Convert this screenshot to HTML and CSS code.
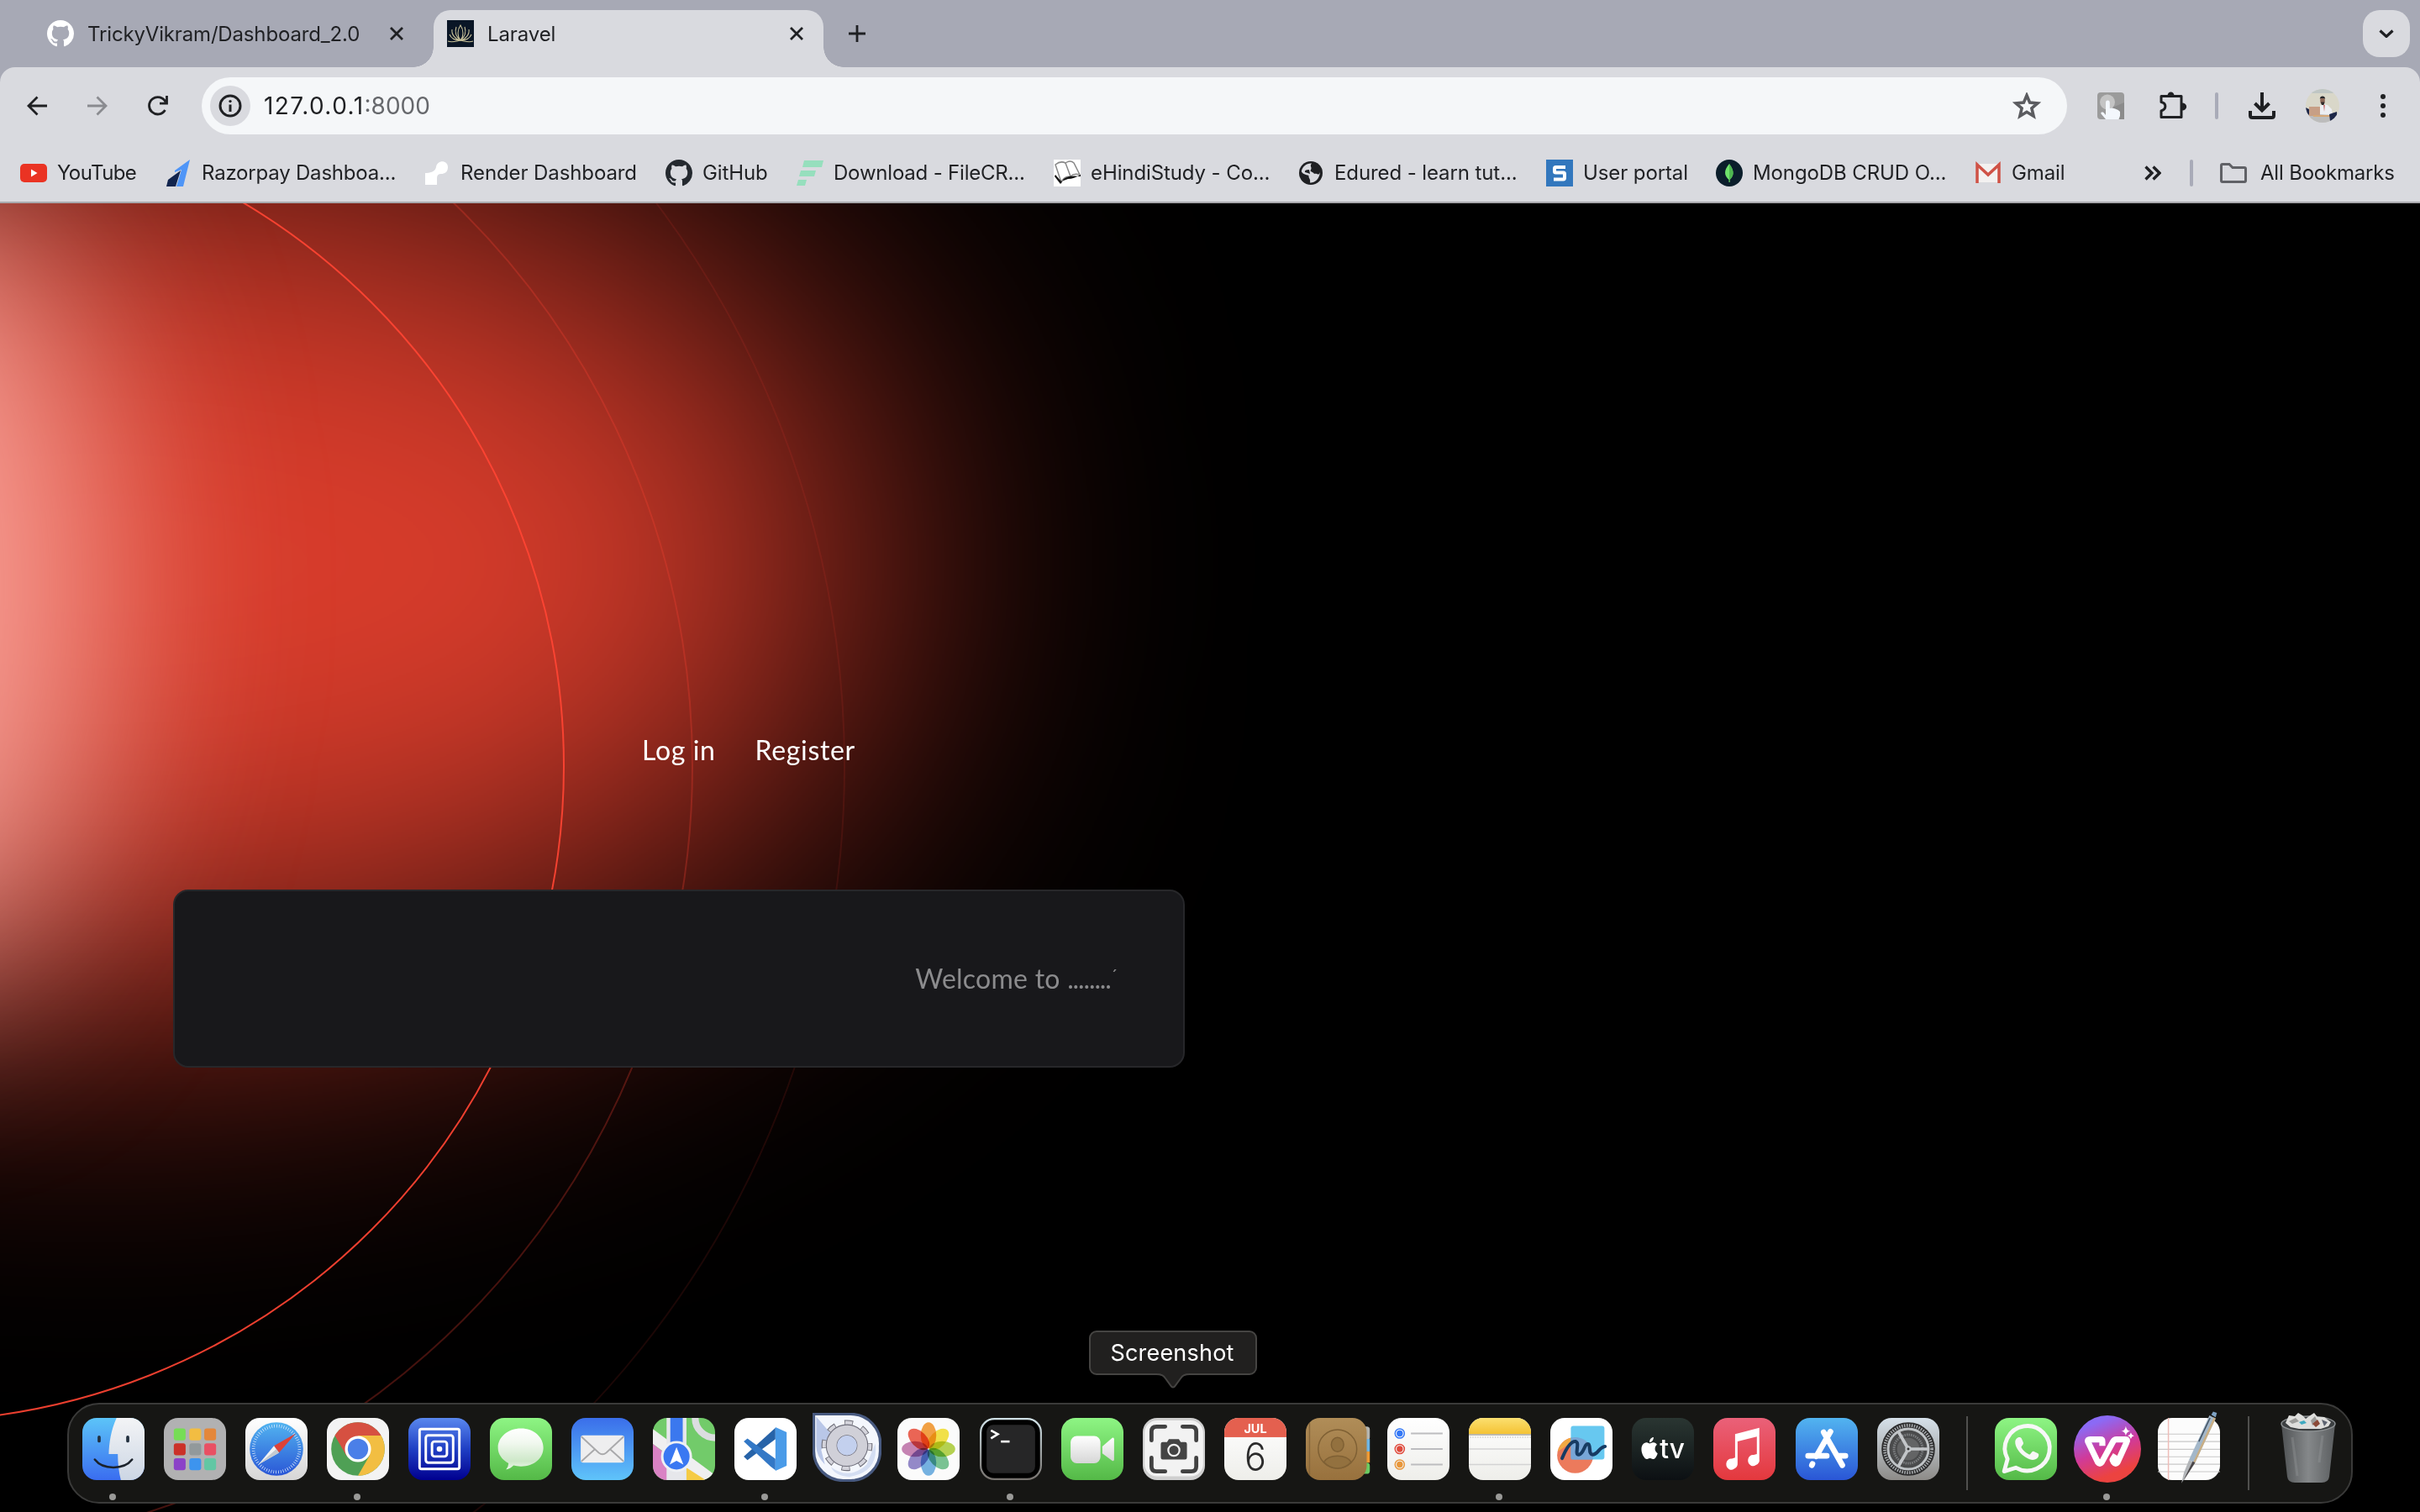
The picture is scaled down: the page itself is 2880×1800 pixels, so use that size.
FILE: index.html
```html
<!DOCTYPE html>
<html lang="en">
<head>
<meta charset="utf-8">
<title>Laravel</title>
<link rel="stylesheet" href="styles.css">
</head>
<body>
<div class="screen">
  <header class="browser">
    <div class="tabs">
      <div class="tab tab-idle">
        <svg class="fav white" viewBox="0 0 16 16"><path id="gh" d="M8 0C3.58 0 0 3.58 0 8c0 3.54 2.29 6.53 5.47 7.59.4.07.55-.17.55-.38 0-.19-.01-.82-.01-1.49-2.01.37-2.53-.49-2.69-.94-.09-.23-.48-.94-.82-1.13-.28-.15-.68-.52-.01-.53.63-.01 1.08.58 1.23.82.72 1.21 1.87.87 2.33.66.07-.52.28-.87.51-1.07-1.78-.2-3.64-.89-3.64-3.95 0-.87.31-1.59.82-2.15-.08-.2-.36-1.02.08-2.12 0 0 .67-.21 2.2.82.64-.18 1.32-.27 2-.27.68 0 1.36.09 2 .27 1.53-1.04 2.2-.82 2.2-.82.44 1.1.16 1.92.08 2.12.51.56.82 1.27.82 2.15 0 3.07-1.87 3.75-3.65 3.95.29.25.54.73.54 1.48 0 1.07-.01 1.93-.01 2.2 0 .21.15.46.55.38A8.013 8.013 0 0016 8c0-4.42-3.58-8-8-8z"/></svg>
        <span class="tab-title t-a">TrickyVikram/Dashboard_2.0</span>
        <svg class="close" viewBox="0 0 16 16"><path d="M1 1 15 15M15 1 1 15"/></svg>
      </div>
      <div class="tab tab-active">
        <svg class="fav" viewBox="0 0 32 32"><rect width="32" height="32" fill="#0a1626"/><g fill="none" stroke="#c9c29a" stroke-width="1.1"><path d="M16 6c-4 6-4 13 0 18 4-5 4-12 0-18zM11 8c-2 6 0 12 5 16M21 8c2 6 0 12-5 16M6 11c-1 6 4 12 10 13M26 11c1 6-4 12-10 13M3 17c2 5 7 7 13 7M29 17c-2 5-7 7-13 7"/><path d="M1 25c5 2 10 0 15-1 5 1 10 3 15 1"/></g></svg>
        <span class="tab-title t-b">Laravel</span>
        <svg class="close" viewBox="0 0 16 16"><path d="M1 1 15 15M15 1 1 15"/></svg>
      </div>
      <svg class="plus" viewBox="0 0 20 20"><path d="M10 0V20M0 10H20"/></svg>
      <div class="tab-menu"><svg viewBox="0 0 18 10"><path d="M1.5 1.5 9 8.5 16.5 1.5"/></svg></div>
    </div>

    <div class="toolbar">
      <svg class="nav-ico" viewBox="0 0 24 24"><path d="M24 12H2M12.5 1.5 2 12 12.5 22.5"/></svg>
      <svg class="nav-ico dim" viewBox="0 0 24 24"><path d="M0 12H22M11.5 1.5 22 12 11.5 22.5"/></svg>
      <svg class="nav-ico" viewBox="0 0 24 24"><path d="M20.5 17A10.2 10.2 0 1 1 21 7.5M22.5 0V9.2H14"/></svg>
      <div class="omnibox">
        <div class="site-info"><svg viewBox="0 0 28 28"><circle cx="14" cy="14" r="12" fill="none" stroke="#1f2023" stroke-width="3"/><path d="M14 12.5V21" stroke="#1f2023" stroke-width="3"/><circle cx="14" cy="8.6" r="1.7" fill="#1f2023"/></svg></div>
        <span class="url">127.0.0.1<span class="port">:8000</span></span>
        <svg class="star" viewBox="0 0 34 32"><path d="M17 3.5 20.6 12.1 30 12.9 22.9 19 25.1 28.2 17 23.3 8.9 28.2 11.1 19 4 12.9 13.4 12.1Z"/></svg>
      </div>
      <svg class="ext" viewBox="0 0 32 32"><rect width="32" height="32" rx="4" fill="#9b9b9b"/><path d="M18 18 32 12V32H18z" fill="#8b8b8b"/><circle cx="12" cy="11.5" r="9" fill="#c4c4c4"/><path d="M10 22V12a2.4 2.4 0 0 1 4.8 0v7l3-.5 3.5 1 3.500 1.500 2.200 2V28l-1.500 4H10L4.500 25.500c-1-2 1.500-2.500 3-1.500l2.500 3z" fill="#f3f7fc"/></svg>
      <svg class="puzzle" viewBox="0 0 34 34"><path d="M3 6.500H27V31.500H3V24C9.500 22 9.500 15 3 13.500Z" fill="none" stroke="#1f2023" stroke-width="3" stroke-linejoin="round"/><path d="M10.500 6a4 4.500 0 0 1 8 0zM28 14.500a4.800 4.200 0 0 1 0 9z" fill="#1f2023"/></svg>
      <i class="bar"></i>
      <svg class="download" viewBox="0 0 32 32"><path d="M16 0V21M7.500 13 16 21.500 24.500 13" /><path d="M2 22V27.500Q2 30 4.500 30H27.500Q30 30 30 27.500V22"/></svg>
      <svg class="avatar" viewBox="0 0 40 40"><defs><clipPath id="av"><circle cx="20" cy="20" r="20"/></clipPath></defs><g clip-path="url(#av)"><rect width="40" height="40" fill="#d9d7c9"/><rect y="28" width="40" height="12" fill="#bcbcbc"/><rect width="40" height="5" fill="#bfc6c4"/><path d="M15 30 17 20 20 18 26 19 31 24 32 31z" fill="#eceef3"/><path d="M21 19h2l-1 8z" fill="#c77"/><ellipse cx="20" cy="13.500" rx="2.800" ry="4.500" fill="#8a6556"/><path d="M16.800 12c0-4.600 6.400-4.600 6.400 0l-1-1h-4.400z" fill="#26262b"/><path d="M18 15.500h4.500l-1 3.500h-2.500z" fill="#2f2a2c"/><rect x="4" y="21" width="13" height="11" fill="#c79f86"/><rect x="9" y="31" width="20" height="2" fill="#d6a878"/><path d="M0 22 4 24V31L0 28zM28 30 37 27V36L29 38z" fill="#1d2748"/></g></svg>
      <svg class="dots" viewBox="0 0 8 28"><circle cx="4" cy="3" r="3"/><circle cx="4" cy="14" r="3"/><circle cx="4" cy="25" r="3"/></svg>
    </div>

    <nav class="bookmarks">
      <a><svg viewBox="0 0 32 32"><rect y="5" width="32" height="22" rx="5" fill="#ea3323"/><path d="M13 11.500V20.500L20.500 16z" fill="#fff"/></svg><span class="b-youtube">YouTube</span></a>
      <a><svg viewBox="0 0 32 32"><path d="M30 0 22 32H14L20 12 12 15V13z" fill="#4f95f7"/><path d="M19 13 13 32H2L4 24z" fill="#11244e"/></svg><span class="b-long">Razorpay Dashboa...</span></a>
      <a><svg viewBox="0 0 32 32"><path d="M2 30V16C9 16 14 14 15 9 16 0 29 0 29 9 29 15 25 17 21 17Q16 17 16 22V30z" fill="#fff"/></svg><span>Render Dashboard</span></a>
      <a><svg viewBox="0 0 16 16" fill="#24292f"><use href="#gh"/></svg><span>GitHub</span></a>
      <a><svg viewBox="0 0 32 32" fill="#96dfbd"><path d="M9 1H32L30 9H7zM5 13H23L21 20H3zM2 24H12L10 31H0z"/></svg><span class="b-long">Download - FileCR...</span></a>
      <a><svg viewBox="0 0 32 32"><rect width="32" height="32" fill="#fff"/><path d="M2 6Q8 1 14 4L20 20Q12 20 9 27zM14 4Q20 0 24 4L31 18Q24 16 20 20" fill="#fff" stroke="#888" stroke-width="1.500"/><path d="M1 20 8 29 12 23Q18 18 32 20V18Q24 23 17 23L9 26 2 18z" fill="#111"/></svg><span>eHindiStudy - Co...</span></a>
      <a><svg viewBox="0 0 32 32"><circle cx="16" cy="16" r="14" fill="#1f2023"/><path d="M17 4.500C14 8 18 9 16 12 14 15 19 14 20 17 24 16 25 20 27 15 26 24 20 28 15 27.500 16 23 13 22 13.500 19 10 18 6 17 4.800 14 6 8 11 4 17 4.500z" fill="#d9dadf"/><path d="M14 12q-6 0-5 3 4 1 6 2z" fill="#1f2023"/></svg><span>Edured - learn tut...</span></a>
      <a><svg viewBox="0 0 32 32"><rect width="32" height="32" fill="#3277bd"/><path d="M23 9H11.500Q10 9 10 10.500V14Q10 15.500 11.500 15.500H20.500Q22 15.500 22 17V21.500Q22 23.500 20.500 23.500H9" fill="none" stroke="#fff" stroke-width="4"/></svg><span>User portal</span></a>
      <a><svg viewBox="0 0 32 32"><circle cx="16" cy="16" r="16" fill="#0b1e2b"/><path d="M16 5C9 13 10 19 15.500 24V27H16.600V24C22 19 22 13 16 5z" fill="#6fe26b"/><path d="M16 5V27H16.600V24C22 19 22 13 16 5z" fill="#4fb851"/></svg><span>MongoDB CRUD O...</span></a>
      <a><svg viewBox="0 0 32 32"><path d="M2 5H30V27H2z" fill="#f3f1f0"/><path d="M3 28V6L16 18 29 6V28" fill="none" stroke="#cf5246" stroke-width="3.500"/></svg><span>Gmail</span></a>
      <svg class="more" viewBox="0 0 20 18"><path d="M1.500 1.500 9 9 1.500 16.500M10.500 1.500 18 9 10.500 16.500"/></svg>
      <i class="bar"></i>
      <a class="all"><svg viewBox="0 0 32 32"><path d="M1.500 7Q1.500 5.500 3 5.500H11L15 9.500H29Q30.500 9.500 30.500 11V25Q30.500 26.500 29 26.500H3Q1.500 26.500 1.500 25z" fill="none" stroke="#606166" stroke-width="3"/></svg><span class="b-long">All Bookmarks</span></a>
    </nav>
  </header>

  <main class="page">
    <svg class="backdrop" viewBox="0 242 1700 1558">
      <defs>
        <filter id="f1" filterUnits="userSpaceOnUse" x="-1800" y="-1200" width="4400" height="4000" color-interpolation-filters="sRGB"><feGaussianBlur stdDeviation="205"/></filter>
        <filter id="f2" filterUnits="userSpaceOnUse" x="-1200" y="-600" width="2400" height="2600" color-interpolation-filters="sRGB"><feGaussianBlur stdDeviation="120"/></filter>
      </defs>
      <ellipse cx="110" cy="668" rx="930" ry="515" fill="#d83c2b" filter="url(#f1)"/>
      <ellipse cx="-130" cy="700" rx="250" ry="480" fill="#ffb9b2" fill-opacity=".8" filter="url(#f2)"/>
      <g fill="none" stroke="#ff4433" stroke-width="2">
        <circle cx="-109" cy="912" r="780" stroke-opacity=".92"/>
        <circle cx="-109" cy="912" r="933" stroke-opacity=".27"/>
        <circle cx="-109" cy="912" r="1114" stroke-opacity=".11"/>
      </g>
    </svg>
    <nav class="auth"><a>Log in</a><a>Register</a></nav>
    <section class="card"><p>Welcome to <span class="ellipsis">........</span><span class="tick">´</span></p></section>
  </main>

  <div class="tooltip"><span>Screenshot</span><svg viewBox="0 0 40 18"><path d="M0 0H40V2C33 2 31 3 29 6L22 15.500Q20 17.500 18 15.500L11 6C9 3 7 2 0 2z" fill="#21201f"/><path d="M0 1C7 1 9 3 11 6L18 15.500Q20 17.500 22 15.500L29 6C31 3 33 1 40 1" fill="none" stroke="#454442" stroke-width="2"/></svg></div>

  <footer class="dock">
    <svg class="defs" width="0" height="0"><defs>
      <linearGradient id="gFinder" x2="0" y2="1"><stop stop-color="#5cc4f8"/><stop offset="1" stop-color="#3a6df0"/></linearGradient>
      <linearGradient id="gFinder2" x2="0" y2="1"><stop stop-color="#f3f4f6"/><stop offset="1" stop-color="#ccd6e4"/></linearGradient>
      <linearGradient id="gGreen" x2="0" y2="1"><stop stop-color="#8ef584"/><stop offset="1" stop-color="#54b947"/></linearGradient>
      <linearGradient id="gBlue" x2="0" y2="1"><stop stop-color="#3a6eea"/><stop offset="1" stop-color="#5fc4fa"/></linearGradient>
      <linearGradient id="gDeep" x2="0" y2="1"><stop stop-color="#5a88ee"/><stop offset=".5" stop-color="#1f3fc4"/><stop offset="1" stop-color="#00008f"/></linearGradient>
      <linearGradient id="gWhite" x2="0" y2="1"><stop stop-color="#fff"/><stop offset="1" stop-color="#d6d6d6"/></linearGradient>
      <linearGradient id="gPaper" x2="0" y2="1"><stop stop-color="#fff"/><stop offset="1" stop-color="#eeeeea"/></linearGradient>
      <linearGradient id="gBubble" x2="0" y2="1"><stop stop-color="#fff"/><stop offset=".35" stop-color="#f1f8ef"/><stop offset=".8" stop-color="#cde8c8"/><stop offset="1" stop-color="#eef8ec"/></linearGradient>
      <linearGradient id="gStore" x2="0" y2="1"><stop stop-color="#52b4f0"/><stop offset="1" stop-color="#2a56d6"/></linearGradient>
      <linearGradient id="gMusic" x2="0" y2="1"><stop stop-color="#ea6179"/><stop offset="1" stop-color="#e4383d"/></linearGradient>
      <linearGradient id="gSet" x2="0" y2="1"><stop stop-color="#d6e1ea"/><stop offset="1" stop-color="#8d8b88"/></linearGradient>
      <linearGradient id="gTv" x2="0" y2="1"><stop stop-color="#2a3632"/><stop offset="1" stop-color="#0c1013"/></linearGradient>
      <linearGradient id="gWood" x2="0" y2="1"><stop stop-color="#b08d58"/><stop offset="1" stop-color="#98713d"/></linearGradient>
      <linearGradient id="gYel" x2="0" y2="1"><stop stop-color="#fbdf70"/><stop offset="1" stop-color="#f4c233"/></linearGradient>
      <linearGradient id="gTerm" x2="0" y2="1"><stop stop-color="#cfe0e6"/><stop offset="1" stop-color="#77736f"/></linearGradient>
      <linearGradient id="gWps" x1=".3" x2=".7" y2="1"><stop offset=".1" stop-color="#8b6af5"/><stop offset=".5" stop-color="#d03a9a"/><stop offset=".85" stop-color="#ec4340"/></linearGradient>
      <linearGradient id="gCan"><stop stop-color="#4f5254"/><stop offset=".5" stop-color="#85888a"/><stop offset="1" stop-color="#5b5e60"/></linearGradient>
      <clipPath id="sq"><rect width="100" height="100" rx="23"/></clipPath>
    </defs></svg>

    <div class="app on"><svg viewBox="0 0 100 100"><g clip-path="url(#sq)"><rect width="100" height="100" fill="url(#gFinder)"/><path d="M55 0C46 20 43 40 42.500 58H57C57 74 59 88 62 100H100V0z" fill="url(#gFinder2)"/></g><path d="M27 31V37M73 31V37" stroke="#22303f" stroke-width="5" stroke-linecap="round"/><path d="M20 67C33 84 67 84 80 67" fill="none" stroke="#1b222b" stroke-width="3.500" stroke-linecap="round"/></svg><i></i></div>
    <div class="app"><svg viewBox="0 0 100 100"><rect width="100" height="100" rx="23" fill="#b1b1b2"/><rect x="16" y="17" width="19" height="19" rx="4" fill="#76dd55"/><rect x="41" y="17" width="19" height="19" rx="4" fill="#f2bd42"/><rect x="65" y="17" width="19" height="19" rx="4" fill="#e4873a"/><rect x="16" y="41" width="19" height="19" rx="4" fill="#cb3128"/><rect x="41" y="41" width="19" height="19" rx="4" fill="#92999b"/><rect x="65" y="41" width="19" height="19" rx="4" fill="#e95063"/><rect x="16" y="65" width="19" height="19" rx="4" fill="#8b41c8"/><rect x="41" y="65" width="19" height="19" rx="4" fill="#3d94ee"/><rect x="65" y="65" width="19" height="19" rx="4" fill="#62c7a4"/></svg><i></i></div>
    <div class="app"><svg viewBox="0 0 100 100"><rect width="100" height="100" rx="23" fill="url(#gWhite)"/><circle cx="50" cy="50" r="43" fill="url(#gStore)"/><circle cx="50" cy="50" r="37" fill="none" stroke="#dcebfb" stroke-width="5" stroke-dasharray="1 2.870"/><path d="M81 25 54 56 46 45z" fill="#dd4238"/><path d="M46 45 54 56 21 75z" fill="#f0f2f4"/><path d="M50 50 54 56 21 75z" fill="#c4cad0"/></svg><i></i></div>
    <div class="app on"><svg viewBox="0 0 100 100"><rect width="100" height="100" rx="23" fill="#f3f3f3"/><circle cx="50" cy="50" r="43" fill="#4fa055"/><path d="M50 50 12.800 28.500A43 43 0 0 1 87.200 28.500z" fill="#d65041"/><path d="M50 28.500H87.200A43 43 0 0 1 50 93L68.500 60.700z" fill="#f2be42"/><path d="M12.800 28.500 31.400 60.700 50 50 50 28.500z" fill="#d65041"/><circle cx="50" cy="50" r="21" fill="#fff"/><circle cx="50" cy="50" r="16.500" fill="#4a7fe8"/></svg><i></i></div>
    <div class="app"><svg viewBox="0 0 100 100"><rect width="100" height="100" rx="23" fill="url(#gDeep)"/><g fill="none" stroke="#fff" stroke-width="4"><rect x="18" y="18" width="64" height="64" rx="3"/><rect x="28" y="28" width="44" height="44" rx="4"/><rect x="38" y="38" width="24" height="24" rx="4"/></g><circle cx="50" cy="50" r="4.500" fill="#fff"/></svg><i></i></div>
    <div class="app"><svg viewBox="0 0 100 100"><rect width="100" height="100" rx="23" fill="url(#gGreen)"/><path d="M50 17C71 17 86 31 86 48S71 78 50 78Q43 78 38 76.500 33 82 26 83 30 78 30 73C19 67 13 58 13 48 13 31 29 17 50 17z" fill="url(#gBubble)"/></svg><i></i></div>
    <div class="app"><svg viewBox="0 0 100 100"><rect width="100" height="100" rx="23" fill="url(#gBlue)"/><rect x="15" y="28" width="70" height="44" rx="4" fill="#eeeeef"/><path d="M16 30 44 56Q50 61 56 56L84 30M16 70 37 51M84 70 63 51" fill="none" stroke="#a9a9ab" stroke-width="2.500"/></svg><i></i></div>
    <div class="app"><svg viewBox="0 0 100 100"><g clip-path="url(#sq)"><rect width="100" height="100" fill="#72cb6a"/><path d="M0 18 100 92V110L80 100 0 42z" fill="#efeff0"/><path d="M0 42 24 60V100H0z" fill="#d982c4"/><path d="M54 80 88 102H54z" fill="#f5cb45"/><path d="M22 0H54V100H22z" fill="#e6e7eb"/><path d="M28 0H48V60H28z" fill="#3b78ee"/><circle cx="100" cy="0" r="32" fill="none" stroke="#dcdde0" stroke-width="11"/></g><circle cx="38" cy="62" r="25" fill="#eef0f4"/><circle cx="38" cy="62" r="21" fill="#3a78f2"/><path d="M38 47 49 75 38 69 27 75z" fill="#fff"/></svg><i></i></div>
    <div class="app on"><svg viewBox="0 0 100 100"><rect width="100" height="100" rx="23" fill="#fff"/><path d="M15 62 21 68 66 34V16z" fill="#2763a8"/><path d="M15 38 21 33 66 66V84L58 78z" fill="#3378c6"/><path d="M66 15 84 23V77L66 85z" fill="#4a9be8"/></svg><i></i></div>
    <div class="app"><svg class="wide" viewBox="0 0 112 112"><path d="M2 2H62A48 48 0 0 1 110 54V62A48 48 0 0 1 62 110H50A48 48 0 0 1 2 62z" fill="#f4f7fd" stroke="#47597f" stroke-width="4.500"/><path d="M6 6 30 34 14 60 20 84Q6 70 6 54z" fill="#b9c7e8"/><path d="M30 88Q60 110 88 84L102 50Q108 96 60 104 36 102 30 88z" fill="#d4def2"/><circle cx="56" cy="53" r="35" fill="none" stroke="#6e6e78" stroke-width="13" stroke-dasharray="13 14.500" stroke-dashoffset="5"/><circle cx="56" cy="53" r="35" fill="none" stroke="#d4d4dc" stroke-width="10" stroke-dasharray="11 16.500" stroke-dashoffset="4"/><circle cx="56" cy="53" r="25" fill="none" stroke="#70707c" stroke-width="19"/><circle cx="56" cy="53" r="25" fill="none" stroke="#d0d0d8" stroke-width="16"/><circle cx="56" cy="53" r="16" fill="#c3d0ee"/></svg><i></i></div>
    <div class="app"><svg viewBox="0 0 100 100"><rect width="100" height="100" rx="23" fill="#fbfbfb"/><g class="petals"><ellipse cx="50" cy="28" rx="12.500" ry="21" fill="#f5a345"/><ellipse cx="50" cy="28" rx="12.500" ry="21" fill="#f5e44a" transform="rotate(45 50 50)"/><ellipse cx="50" cy="28" rx="12.500" ry="21" fill="#b8d552" transform="rotate(90 50 50)"/><ellipse cx="50" cy="28" rx="12.500" ry="21" fill="#7cc595" transform="rotate(135 50 50)"/><ellipse cx="50" cy="28" rx="12.500" ry="21" fill="#77b4e4" transform="rotate(180 50 50)"/><ellipse cx="50" cy="28" rx="12.500" ry="21" fill="#968bcb" transform="rotate(225 50 50)"/><ellipse cx="50" cy="28" rx="12.500" ry="21" fill="#c885b5" transform="rotate(270 50 50)"/><ellipse cx="50" cy="28" rx="12.500" ry="21" fill="#ee6656" transform="rotate(315 50 50)"/></g></svg><i></i></div>
    <div class="app on"><svg viewBox="0 0 100 100"><rect x="1.500" y="1.500" width="97" height="97" rx="22" fill="#000" stroke="url(#gTerm)" stroke-width="3"/><rect x="11" y="11" width="78" height="78" rx="11" fill="#262627"/><path d="M18 20 29 26 18 33" fill="none" stroke="#fff" stroke-width="3.500"/><path d="M34 38H48" stroke="#fff" stroke-width="3.500"/></svg><i></i></div>
    <div class="app"><svg viewBox="0 0 100 100"><rect width="100" height="100" rx="23" fill="url(#gGreen)"/><rect x="15" y="29" width="48" height="44" rx="10" fill="url(#gWhite)"/><path d="M66 46 82 32Q85 31 85 34V67Q85 70 82 69L66 57z" fill="url(#gWhite)"/></svg><i></i></div>
    <div class="app"><svg viewBox="0 0 100 100"><rect width="100" height="100" rx="23" fill="#cfcfcf"/><rect x="3" y="4" width="94" height="90" rx="20" fill="#f2f2f2"/><path d="M14 36V22Q14 14 22 14H36M64 14H78Q86 14 86 22V36M86 64V78Q86 86 78 86H64M36 86H22Q14 86 14 78V64" fill="none" stroke="#414141" stroke-width="6.500" stroke-linecap="round"/><path d="M29 42Q29 39 32 39H39L42 34H58L61 39H68Q71 39 71 42V64Q71 67 68 67H32Q29 67 29 64z" fill="#444"/><circle cx="50" cy="52" r="9" fill="none" stroke="#f2f2f2" stroke-width="3"/></svg><i></i></div>
    <div class="app"><svg viewBox="0 0 100 100"><g clip-path="url(#sq)"><rect width="100" height="100" fill="url(#gPaper)"/><rect width="100" height="31" fill="#e4604f"/></g><text x="50" y="24" text-anchor="middle" font-size="19.500" font-weight="700" fill="#fff">JUL</text><text x="50" y="85" text-anchor="middle" font-size="62" font-weight="300" fill="#2c2c2c" textLength="35" lengthAdjust="spacingAndGlyphs">6</text></svg><i></i></div>
    <div class="app"><svg viewBox="0 0 100 100" class="spill"><rect x="84" y="14" width="19" height="22" rx="5" fill="#b5b5b0"/><rect x="84" y="34" width="19" height="20" fill="#6db6e6"/><rect x="84" y="54" width="19" height="18" fill="#ef9a33"/><rect x="84" y="72" width="19" height="18" rx="5" fill="#6acb62"/><rect width="98" height="100" rx="23" fill="url(#gWood)"/><path d="M6 8V92" stroke="#86663a" stroke-width="2"/><g fill="#93713f" stroke="#7f6034" stroke-width="2"><circle cx="51" cy="50" r="31" fill="none"/><ellipse cx="51" cy="43" rx="10" ry="11.500"/><path d="M29 71Q35 61 51 61T73 71Q64 81 51 81T29 71z"/></g></svg><i></i></div>
    <div class="app"><svg viewBox="0 0 100 100"><rect width="100" height="100" rx="23" fill="url(#gPaper)"/><g fill="none" stroke-width="2"><circle cx="20" cy="25" r="7.500" stroke="#3478f6"/><circle cx="20" cy="50" r="7.500" stroke="#e04a3c"/><circle cx="20" cy="75" r="7.500" stroke="#e8963a"/></g><circle cx="20" cy="25" r="5" fill="#3478f6"/><circle cx="20" cy="50" r="5" fill="#e04a3c"/><circle cx="20" cy="75" r="5" fill="#e8963a"/><path d="M38 25H89M38 50H89M38 75H89" stroke="#bdbdbf" stroke-width="2.500"/></svg><i></i></div>
    <div class="app on"><svg viewBox="0 0 100 100"><g clip-path="url(#sq)"><rect width="100" height="100" fill="url(#gPaper)"/><rect width="100" height="26" fill="url(#gYel)"/><path d="M0 27H100" stroke="#a9a69c" stroke-width="2"/><path d="M2 31H100" stroke="#c9c7c2" stroke-width="2" stroke-dasharray="1.500 2.500"/><path d="M0 50H100M0 75H100" stroke="#d3d3d3" stroke-width="2"/></g></svg><i></i></div>
    <div class="app"><svg viewBox="0 0 100 100"><rect width="100" height="100" rx="23" fill="#fff"/><circle cx="40" cy="60" r="29" fill="#ec7a5c"/><path d="M12 54A29 29 0 0 1 40 31L33 40z" fill="#f2a942"/><rect x="33" y="13" width="54" height="54" rx="4" fill="#56c2ee" opacity=".9"/><path d="M33 67V32A29 29 0 0 1 68 67z" fill="#7f9fd4" opacity=".75"/><path d="M19 65C26 48 33 37 41 38 48 40 38 60 46 59 54 58 55 40 61 42 66 45 60 58 68 59 77 59 78 47 88 46" fill="none" stroke="#173b63" stroke-width="5.500" stroke-linecap="round"/></svg><i></i></div>
    <div class="app"><svg viewBox="0 0 100 100"><rect width="100" height="100" rx="23" fill="url(#gTv)"/><path transform="translate(12.500 31) scale(2 2.200)" fill="#fff" d="M11.182.008C11.148-.03 9.923.023 8.857 1.180c-1.066 1.156-.902 2.482-.878 2.516s1.520.087 2.475-1.258.762-2.391.728-2.430m3.314 11.733c-.048-.096-2.325-1.234-2.113-3.422s1.675-2.789 1.698-2.854-.597-.79-1.254-1.157a3.700 3.700 0 0 0-1.563-.434c-.108-.003-.483-.095-1.254.116-.508.139-1.653.589-1.968.607-.316.018-1.256-.522-2.267-.665-.647-.125-1.333.131-1.824.328-.49.196-1.422.754-2.074 2.237-.652 1.482-.311 3.830-.067 4.560s.625 1.924 1.273 2.796c.576.984 1.340 1.667 1.659 1.899s1.219.386 1.843.067c.502-.308 1.408-.485 1.766-.472.357.013 1.061.154 1.782.539.571.197 1.111.115 1.652-.105.541-.221 1.324-1.059 2.238-2.758q.52-1.185.473-1.282"/><text x="45" y="65.500" font-size="43" font-weight="500" fill="#fff" textLength="40" lengthAdjust="spacingAndGlyphs">tv</text></svg><i></i></div>
    <div class="app"><svg viewBox="0 0 100 100"><rect width="100" height="100" rx="23" fill="url(#gMusic)"/><path d="M39 25 74 16V29L39 38zM35 26 39 25V73A10 9 0 0 1 33 82 8 9 0 1 1 30 65.500L35 64zM70 20 74 17V66A10 9 0 0 1 68 76 8 9 0 1 1 65 59.500L70 58z" fill="#fff"/></svg><i></i></div>
    <div class="app"><svg viewBox="0 0 100 100"><rect width="100" height="100" rx="23" fill="url(#gStore)"/><g stroke="#fff" stroke-width="9" stroke-linecap="round"><path d="M45 23 75 76M56 22 33 62M27 74 26 76M20 61H50M68 61H80"/></g></svg><i></i></div>
    <div class="app"><svg viewBox="0 0 100 100"><rect width="100" height="100" rx="23" fill="url(#gSet)"/><circle cx="50" cy="50" r="43" fill="#2d2d2e"/><circle cx="50" cy="50" r="38" fill="none" stroke="#a9adb0" stroke-width="5" stroke-dasharray="2 2"/><circle cx="50" cy="50" r="32.500" fill="#4a4b4c" stroke="#bfc3c6" stroke-width="4"/><circle cx="50" cy="50" r="23" fill="none" stroke="#7c7e80" stroke-width="4" stroke-dasharray="2 1.500"/><circle cx="50" cy="50" r="18" fill="#636465"/><path d="M50 50H82M50 50 34 22M50 50 34 78" stroke="#c3c6c9" stroke-width="5"/><circle cx="50" cy="50" r="5" fill="#c3c6c9"/><circle cx="50" cy="50" r="2" fill="#333"/></svg><i></i></div>
    <span class="sep s1"></span>
    <div class="app"><svg viewBox="0 0 100 100"><rect width="100" height="100" rx="23" fill="url(#gGreen)"/><path d="M15 86 20.500 66A36 36 0 1 1 34 80z" fill="none" stroke="#f7f7f7" stroke-width="6.500" stroke-linejoin="round"/><path transform="translate(21.500 22) scale(2.250)" d="M5 7.500C5 5.500 6.500 4 8 4 8.800 4 9.300 4.300 9.600 5L10.700 7.700C11 8.400 10.900 8.900 10.400 9.500L9.600 10.500C9.300 10.900 9.300 11.200 9.500 11.600 10.800 13.700 12.500 15.200 14.700 16.200 15.200 16.400 15.500 16.400 15.800 16L17 14.500C17.400 14 17.900 13.900 18.400 14.200L21 15.500C21.700 15.900 21.900 16.200 21.800 17 21.600 19 19.600 20.200 17.600 20.200 12 19.800 5 13 5 7.500z" fill="#f7f7f7"/></svg><i></i></div>
    <div class="app on"><svg class="round" viewBox="0 0 106 106"><circle cx="53" cy="53" r="53" fill="url(#gWps)"/><path d="M45 48V41Q45 38 42 38H26Q20 38 23 43L38 74Q41 78 44 74L62 41Q64 38 67 38H81Q86 38 83 43L69 74Q66 78 63 74L61 70 66 62" fill="none" stroke="#fff" stroke-width="9.500" stroke-linejoin="round"/><path d="M82 17Q83 24 89 25 83 26 82 32 81 26 75 25 81 24 82 17zM90 27Q91 31 95 32 91 33 90 37 89 33 85 32 89 31 90 27z" fill="#fff"/></svg><i></i></div>
    <div class="app"><svg class="spill" viewBox="0 0 100 100"><rect width="100" height="100" rx="23" fill="#fcfcfc"/><path d="M0 26H100M0 38H100M0 50.500H100M0 62.500H100M0 74.500H100M0 86.500H100" stroke="#c8c8c8" stroke-width="1.500"/><path d="M17 0V100" stroke="#eebcb8" stroke-width="2"/><path d="M83-4 93 1 60 72 50 68z" fill="#a3b7c9"/><path d="M90-1 93 1 60 72 57 71z" fill="#c9ae84"/><path d="M84 0 66 38" stroke="#405061" stroke-width="2"/><path d="M86-5 89-10 95-8 93-1z" fill="#7fa3c4"/><path d="M50 68 60 72 45 94 38 105 42 88z" fill="#b3b6b9"/><path d="M56 70 60 72 40 103z" fill="#4a4648"/></svg><i></i></div>
    <span class="sep s2"></span>
    <div class="app"><svg class="trash" viewBox="0 0 66 84"><path d="M1 14 8 77Q9 84 17 84H49Q57 84 58 77L65 14Q50 22 33 22T1 14z" fill="url(#gCan)"/><ellipse cx="33" cy="14" rx="32" ry="9" fill="#3c3f41" stroke="#8d9193" stroke-width="1.500"/><path d="M6 13 10 4 17 5 21 1 26 4 30 8 34 5 40 1 44 6 52 6 60 12 57 17 48 20H22L12 18z" fill="#dededc"/><path d="M10 11 18 7 22 11 14 14zM36 10 41 5 44 11 38 16z" fill="#9b9b99"/><path d="M22 12 28 10 31 13 25 15z" fill="#3fa9c0"/><path d="M38 14 44 9 47 14 42 18z" fill="#8b4a38"/><path d="M49 9 56 12 52 17z" fill="#5d6370"/><path d="M14 30 20 76M50 28 46 60" stroke="#a0a3a5" stroke-width="3" opacity=".3"/></svg><i></i></div>
  </footer>
</div>
</body>
</html>
```
FILE: styles.css
```css
* { box-sizing: border-box; }
body { margin: 0; background: #000; }
.screen {
  position: relative;
  width: 2880px;
  height: 1800px;
  overflow: hidden;
  display: flex;
  flex-direction: column;
  font-family: Inter, "Liberation Sans", sans-serif;
  color: #1f2023;
}
svg { display: block; flex: none; }
.browser { flex: none; height: 242px; background: #a7a9b5; border-bottom: 2px solid #a9a9ad; }

/* Tab strip */
.tabs { height: 80px; padding: 12px 12px 0 0; display: flex; align-items: stretch; font-size: 24px; }
.tab { display: flex; align-items: center; height: 68px; padding-bottom: 12px; }
.tab-idle { width: 516px; padding-left: 56px; }
.tab-active { position: relative; width: 464px; padding-left: 16px; background: #d9dadf; border-radius: 20px 20px 0 0; }
.tab-active::before, .tab-active::after {
  content: ""; position: absolute; bottom: 0; width: 24px; height: 24px;
}
.tab-active::before { left: -24px; background: radial-gradient(circle at 0 0, transparent 23.5px, #d9dadf 24px); }
.tab-active::after { right: -24px; background: radial-gradient(circle at 100% 0, transparent 23.5px, #d9dadf 24px); }
.fav { width: 32px; height: 32px; }
.white { fill: #fff; }
.tab-title { margin-left: 16px; white-space: nowrap; flex: 1; }
.t-a { letter-spacing: -0.16px; }
.t-b { letter-spacing: -0.1px; }
.close { width: 16px; height: 16px; stroke: #1f2023; stroke-width: 2.8; }
.tab-idle .close { margin-right: 36px; }
.tab-active .close { margin-right: 24px; }
.plus { width: 20px; height: 20px; margin: 18px 0 0 30px; stroke: #1f2023; stroke-width: 2.8; }
.tab-menu { margin-left: auto; width: 56px; height: 56px; border-radius: 20px; background: #d9dadf; display: flex; align-items: center; justify-content: center; }
.tab-menu svg { width: 18px; height: 10px; fill: none; stroke: #1f2023; stroke-width: 3.2; }

/* Toolbar */
.toolbar { height: 92px; background: #d9dadf; border-radius: 18px 18px 0 0; display: flex; align-items: center; padding-left: 32px; }
.nav-ico { width: 24px; height: 24px; margin-right: 48px; fill: none; stroke: #1f2023; stroke-width: 2.8; }
.nav-ico:nth-child(3) { margin-right: 40px; }
.nav-ico.dim { stroke: #8a8b90; }
.omnibox { width: 2220px; height: 68px; border-radius: 34px; background: #f5f7f9; display: flex; align-items: center; padding: 0 31px 0 10px; }
.site-info { width: 48px; height: 48px; border-radius: 50%; background: #d9dadf; display: grid; place-items: center; }
.site-info svg { width: 28px; height: 28px; }
.url { font-size: 28px; margin-left: 16px; flex: 1; letter-spacing: 1.45px; }
.port { color: #66686c; letter-spacing: 0; }
.star { width: 34px; height: 32px; fill: none; stroke: #5b5c60; stroke-width: 3.6; }
.ext { width: 32px; height: 32px; margin-left: 36px; }
.puzzle { width: 34px; height: 34px; margin: -3px 0 0 41px; }
.bar { width: 4px; height: 32px; border-radius: 2px; background: #a9abb8; }
.toolbar .bar { margin-left: 33px; }
.download { width: 32px; height: 32px; margin-left: 36px; fill: none; stroke: #1f2023; stroke-width: 4; }
.avatar { width: 40px; height: 40px; margin-left: 36px; }
.dots { width: 8px; height: 28px; margin-left: 48px; fill: #1f2023; }

/* Bookmarks */
.bookmarks {
  height: 68px; background: #d9dadf; padding: 0 0 1px 24px; font-size: 24px; letter-spacing: -0.1px;
  display: grid; align-items: center;
  grid-template-columns: 172px 308px 288px 156px 306px 290px 296px 202px 308px 202px 54px 36px 1fr;
}
.bookmarks a { display: flex; align-items: center; gap: 12px; white-space: nowrap; }
.bookmarks a svg { width: 32px; height: 32px; }
.bookmarks .more { width: 20px; height: 18px; fill: none; stroke: #1f2023; stroke-width: 3.4; }
.bookmarks a.all { gap: 16px; }
.b-youtube { letter-spacing: -0.6px; }
.b-long { letter-spacing: -0.2px; }

/* Page */
.page { position: relative; flex: 1; background: #000; font-family: Lato, "Open Sans", sans-serif; font-size: 32px; line-height: 48px; overflow: hidden; padding: 627px 0 0 206px; }
.backdrop { position: absolute; left: 0; top: 0; width: 1700px; height: 1558px; }
.auth { position: relative; display: flex; gap: 47px; padding-left: 558px; color: #fff; white-space: nowrap; letter-spacing: 0.65px; }
.card { position: relative; width: 1204px; height: 212px; margin-top: 142px; border: 2px solid #27272a; border-radius: 18px; background: #18181b; color: #8b8b8d; display: flex; align-items: center; justify-content: flex-end; padding: 0 78px 0 0; }
.card p { margin: 0; white-space: nowrap; letter-spacing: 0.25px; }
.ellipsis { letter-spacing: -1.1px; }
.tick { font-size: 20px; vertical-align: 9px; line-height: 1; }

/* Tooltip */
.tooltip { position: absolute; left: 1296px; top: 1584px; width: 200px; height: 53px; border: 2px solid #454442; border-radius: 9px; background: #21201f; color: #fff; font-size: 27px; letter-spacing: 0.2px; padding-right: 2px; display: flex; align-items: center; justify-content: center; }
.tooltip svg { position: absolute; left: 78px; top: 49px; width: 40px; height: 18px; }

/* Dock */
.dock { position: absolute; left: 80px; top: 1670px; width: 2720px; height: 120px; border: 2px solid #3a3a39; border-radius: 38px; background: #161614; display: flex; padding-left: 4px; }
.defs { position: absolute; }
.dock text { font-family: Inter, "Liberation Sans", sans-serif; }
.petals ellipse { mix-blend-mode: multiply; }
.app { flex: none; width: 97.1px; height: 116px; display: flex; flex-direction: column; align-items: center; padding-top: 16px; }
.app > svg { width: 74px; height: 74px; }
.app > svg.spill { overflow: visible; }
.app > svg.wide { width: 82px; height: 82px; margin: -6px 0 -2px; }
.app > svg.round { width: 80px; height: 80px; margin: -3px 0; }
.app > svg.trash { width: 66px; height: 84px; margin: -7px 0 -3px; }
.app i { display: none; width: 8px; height: 8px; margin: 16px 2px 0 0; border-radius: 50%; background: #9a9a98; }
.app.on i { display: block; }
.sep { flex: none; width: 2px; height: 88px; margin-top: 14px; background: #50504e; }
.s1 { margin-left: 21px; margin-right: 20px; }
.s2 { margin-left: 22px; margin-right: 21px; }
```
